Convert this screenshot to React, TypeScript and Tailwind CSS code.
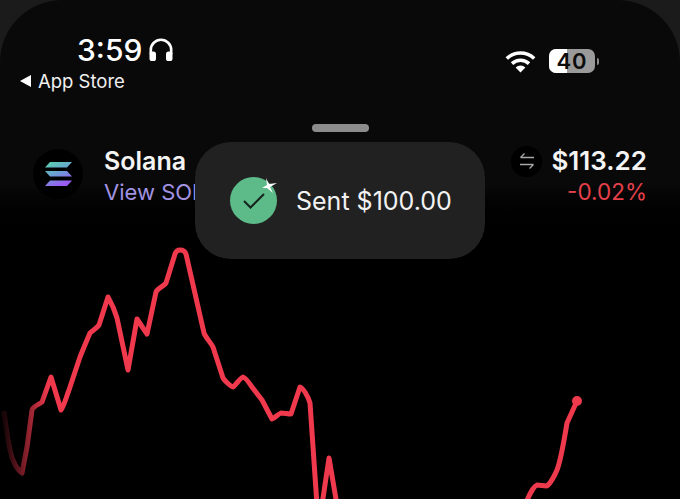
import React from 'react';

const chartLeft =
  'M4 413 L8 440 C10 450 11 456 13 460 C15 465 19 471 22 473 L27 447 L32 410 C33 406 40 404 42 402 L51 377 L61 410 C64 406 66 398 69 390 L80 357 C84 347 87 340 90 333 C93 330 97 328 99 325 L108 297 C112 304 115 311 117 318 L128 370 L137 319 L147 334 L156 292 C158 288 164 286 166 283 L175 254 C176 251 178 250 180 250 C183 250 185 251 186 254 L204 333 C206 338 211 343 213 347 L223 378 C225 381 230 386 233 387 C236 385 240 378 243 377 C246 378 250 384 252 387 L262 400 L272 419 C275 418 278 414 281 413 C284 413 288 414 291 414 L300 387 C303 388 308 396 310 403 L317 505';
const chartSpike = 'M322 505 L329 458 L337 505';
const chartRight = 'M526 503 C529 495 534 486 537 485 L547 486 C550 484 555 475 557 470 C561 460 565 435 567 423 L577 401';

function Headphones() {
  return (
    <svg width="24" height="24" viewBox="0 0 24 24" fill="none">
      <path d="M1.8 16 V12 a10.2 10.2 0 0 1 20.4 0 V16" stroke="white" strokeWidth="2.6" />
      <rect x="0.5" y="13.5" width="6.5" height="9.5" rx="2.6" fill="white" />
      <rect x="17" y="13.5" width="6.5" height="9.5" rx="2.6" fill="white" />
    </svg>
  );
}

function Wifi() {
  return (
    <svg width="31" height="23" viewBox="0 0 31 23" fill="none" stroke="white" strokeWidth="3.6">
      <path d="M1.8 8.5 a20 20 0 0 1 27.4 0" />
      <path d="M7 13.6 a12.5 12.5 0 0 1 17 0" />
      <path d="M15.5 22.4 L10.6 17.6 a7 7 0 0 1 9.8 0 Z" fill="white" stroke="none" />
    </svg>
  );
}

function Battery() {
  return (
    <div className="flex items-center gap-[2px]">
      <div className="relative flex h-[24px] w-[46px] overflow-hidden rounded-[7px] bg-[#9a9a9a]">
        <div className="h-full w-[18px] bg-white" />
        <span className="absolute inset-0 flex items-center justify-center text-[22px] font-semibold leading-none tracking-[1px] text-[#0c0c0c]">
          40
        </span>
      </div>
      <div className="h-[7px] w-[2px] rounded-r-full bg-[#8a8a8a]" />
    </div>
  );
}

function SolanaLogo() {
  return (
    <div className="mb-[6px] flex h-[50px] w-[50px] items-center justify-center rounded-full bg-black">
      <svg width="27" height="24" viewBox="0 0 27 24">
        <defs>
          <linearGradient id="sol" x1="0" y1="0" x2="0.5" y2="1">
            <stop offset="0" stopColor="#58d8ab" />
            <stop offset="0.55" stopColor="#6a9fd4" />
            <stop offset="1" stopColor="#9a5cf5" />
          </linearGradient>
        </defs>
        <path d="M5 0 H27 L22 5.5 H0 Z M0 9 H22 L27 14.5 H5 Z M5 18.5 H27 L22 24 H0 Z" fill="url(#sol)" />
      </svg>
    </div>
  );
}

function SentToast() {
  return (
    <div className="absolute left-[195px] top-[142px] flex h-[117px] w-[290px] items-center rounded-[36px] bg-[#212121] pl-[35px]">
      <div className="relative flex h-[47px] w-[47px] items-center justify-center rounded-full bg-[#5dbb8a]">
        <svg width="24" height="18" viewBox="0 0 24 18" fill="none" className="mt-[1px]">
          <path d="M2 9 L8.5 15.5 L22 2" stroke="#16241e" strokeWidth="2" />
        </svg>
        <svg width="18" height="17" viewBox="0 0 18 17" className="absolute left-[30px] top-0">
          <path d="M6 1 L9 7 L17 6 L10 10 L13 16 L7 11 L2 11 L7 8 Z" fill="white" />
        </svg>
      </div>
      <span className="ml-[19px] mt-[2px] text-[25px] leading-none text-[#f2f2f2]">Sent $100.00</span>
    </div>
  );
}

export default function App() {
  return (
    <div className="relative h-[499px] w-[680px] overflow-hidden bg-[#1b1b1b] font-['Inter',sans-serif] text-white">
      <div className="h-full w-full rounded-t-[62px] bg-gradient-to-b from-[#090909] from-[37%] to-black to-[48%]">
        {/* status bar */}
        <div className="flex items-start justify-between pl-[20px] pr-[81px] pt-[34px]">
          <div>
            <div className="flex items-center gap-[7px] pl-[57px]">
              <span className="text-[30px] font-medium leading-[32px]">3:59</span>
              <Headphones />
            </div>
            <div className="mt-[4px] flex items-center gap-[7px]">
              <span className="h-0 w-0 border-y-[6px] border-r-[11px] border-y-transparent border-r-white" />
              <span className="text-[18.5px] leading-[22px] text-[#f0f0f0]">App Store</span>
            </div>
          </div>
          <div className="flex items-center gap-[13px] pt-[15px]">
            <Wifi />
            <Battery />
          </div>
        </div>

        <div className="mx-auto mt-[32px] h-[8px] w-[57px] rounded-full bg-[#8c8c8c]" />

        {/* coin header */}
        <div className="mt-[8px] flex items-start justify-between pl-[33px] pr-[33px]">
          <div className="flex items-center gap-[21px] pt-[7px]">
            <SolanaLogo />
            <div>
              <div className="text-[25px] font-semibold leading-[28px] text-[#f4f4f4]">Solana</div>
              <div className="mt-[2px] text-[22px] leading-[30px] text-[#a193e2]">View SOL</div>
            </div>
          </div>
          <div className="flex flex-col items-end pt-[3px]">
            <div className="flex items-center gap-[9px]">
              <div className="flex h-[31px] w-[31px] items-center justify-center rounded-full bg-black">
                <svg width="14" height="16" viewBox="0 0 14 16" fill="none" stroke="#a8a8a8" strokeWidth="1.3">
                  <path d="M0.5 4.5 H14 M0.5 4.5 L4.5 0.5 M13.5 11.5 H0 M13.5 11.5 L9.5 15.5" />
                </svg>
              </div>
              <span className="text-[26px] font-semibold leading-[36px] text-[#f4f4f4]">$113.22</span>
            </div>
            <span className="mt-[1px] text-[22.5px] leading-[24px] text-[#e5404a]">-0.02%</span>
          </div>
        </div>
      </div>

      {/* price line, free drawing across the lower half */}
      <svg width="680" height="499" viewBox="0 0 680 499" fill="none" className="absolute left-0 top-0">
        <defs>
          <linearGradient id="fade" gradientUnits="userSpaceOnUse" x1="4" y1="0" x2="48" y2="0">
            <stop offset="0" stopColor="#f0394d" stopOpacity="0.1" />
            <stop offset="1" stopColor="#f0394d" />
          </linearGradient>
        </defs>
        <g stroke="#ee3a4c" strokeWidth="5" strokeLinejoin="round" strokeLinecap="round">
          <path d={chartLeft} stroke="url(#fade)" />
          <path d={chartSpike} />
          <path d={chartRight} />
        </g>
        <circle cx="577" cy="401" r="5" fill="#ee3a4c" />
      </svg>

      <SentToast />
    </div>
  );
}
